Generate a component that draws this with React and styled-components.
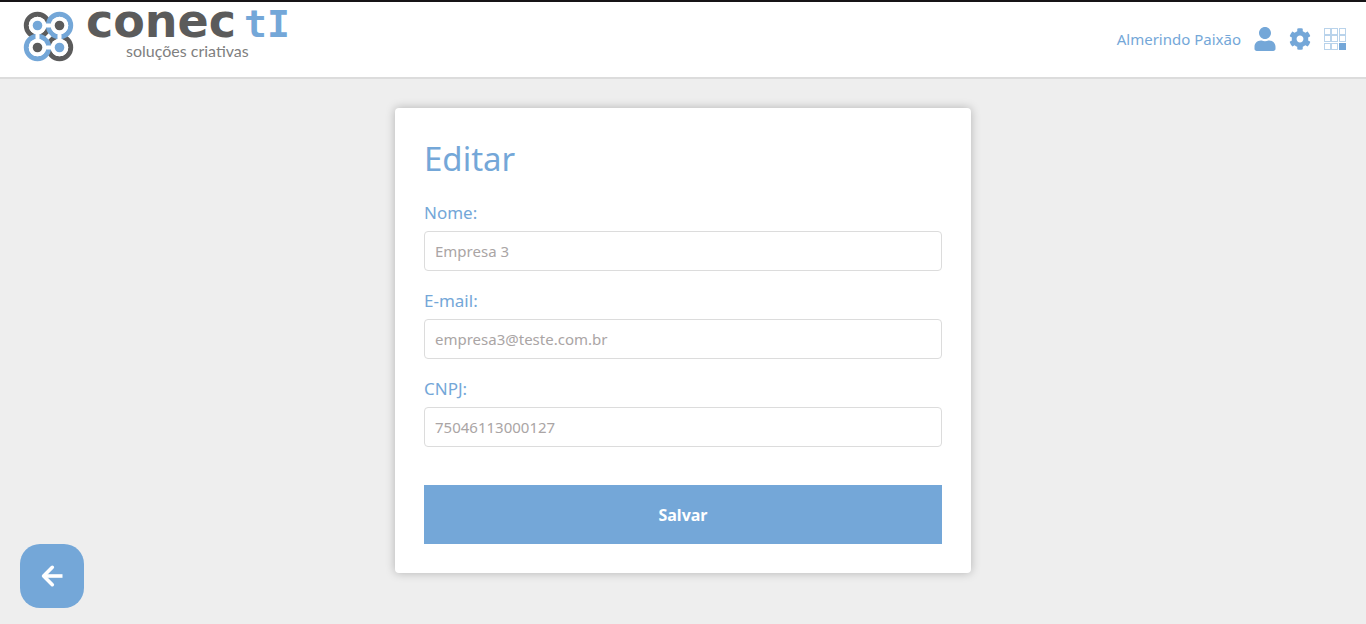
import React from 'react';
import styled, { createGlobalStyle } from 'styled-components';
import { FaUser, FaCog } from 'react-icons/fa';

const blue = '#74a7d8';
const dark = '#5b5b5b';

const GlobalStyle = createGlobalStyle`
  *, *::before, *::after { box-sizing: border-box; }
  html { background: #eee; }
  body {
    margin: 0;
    background: #eee;
    color: ${blue};
    font-family: "Noto Sans", sans-serif;
  }
`;

const Page = styled.div`
  min-height: 100vh;
`;

const Header = styled.header`
  display: flex;
  align-items: flex-start;
  justify-content: space-between;
  height: 79px;
  padding: 9px 20px 0 23px;
  background: #fff;
  border-top: 2px solid #161416;
  border-bottom: 2px solid #dcdcdc;
`;

const Brand = styled.a`
  display: flex;
  gap: 12px;
  text-decoration: none;
`;

const BrandText = styled.span`
  display: flex;
  flex-direction: column;
`;

const Wordmark = styled.span`
  display: flex;
  align-items: baseline;
  gap: 8px;
  height: 28px;
  font: bold 46px/20px "DejaVu Sans", sans-serif;
  color: ${dark};
`;

const WordmarkEnd = styled.span`
  font-family: "DejaVu Sans Mono", monospace;
  font-size: 38px;
  color: ${blue};
`;

const Tagline = styled.span`
  padding-left: 40px;
  font: 16px/24px Lato, sans-serif;
  color: #808080;
`;

const UserNav = styled.nav`
  display: flex;
  align-items: center;
  gap: 13px;
  padding-top: 16px;
`;

const UserName = styled.span`
  font: 15px/24px "Noto Sans", sans-serif;
`;

const IconButton = styled.button`
  display: flex;
  justify-content: center;
  width: 22px;
  padding: 0;
  border: 0;
  background: none;
  color: ${blue};
  cursor: pointer;
`;

const Main = styled.main`
  padding: 29px 20px;
`;

const Card = styled.form`
  display: flex;
  flex-direction: column;
  max-width: 576px;
  margin: 0 auto;
  padding: 29px;
  border-radius: 4px;
  background: #fff;
  box-shadow: 0 0 10px rgba(0, 0, 0, 0.25);
`;

const Title = styled.h1`
  margin: 0 0 20px;
  font-size: 33px;
  line-height: 44px;
  font-weight: 400;
`;

const Fields = styled.div`
  display: flex;
  flex-direction: column;
  gap: 18px;
`;

const Field = styled.div`
  display: flex;
  flex-direction: column;
  gap: 6px;
`;

const Label = styled.label`
  font-size: 17px;
  line-height: 24px;
`;

const Input = styled.input`
  height: 40px;
  width: 100%;
  padding: 0 10px;
  border: 1px solid #dcdcdc;
  border-radius: 4px;
  background: #fff;
  color: #aaa5a5;
  font: 15px "Noto Sans", sans-serif;
`;

const SaveButton = styled.button`
  height: 59px;
  margin-top: 38px;
  border: 0;
  background: ${blue};
  color: #fff;
  font: bold 16px "Noto Sans", sans-serif;
  cursor: pointer;
`;

const BackButton = styled.button`
  position: fixed;
  left: 20px;
  bottom: 16px;
  display: flex;
  align-items: center;
  justify-content: center;
  width: 64px;
  height: 64px;
  padding: 0;
  border: 0;
  border-radius: 20px;
  background: ${blue};
  cursor: pointer;
`;

const logoNodes = [
  { x: 14.5, y: 14.5, ring: dark, dot: blue },
  { x: 36.5, y: 36.5, ring: dark, dot: blue },
  { x: 36.5, y: 14.5, ring: blue, dot: dark },
  { x: 14.5, y: 36.5, ring: blue, dot: dark },
];

function LogoMark() {
  return (
    <svg width="51" height="51" viewBox="0 0 51 51" aria-hidden="true">
      {logoNodes.map(({ x, y, ring }) => (
        <circle key={`${x}-${y}`} cx={x} cy={y} r="11.2" fill="none" stroke={ring} strokeWidth="5" />
      ))}
      {logoNodes.map(({ x, y }) => (
        <circle key={`${x}-${y}`} cx={x} cy={y} r="8.8" fill="#fff" />
      ))}
      <path d="M14.5 14.5H36.5V36.5H14.5Z" fill="none" stroke="#fff" strokeWidth="4" />
      <path d="M25.5 22.5L28.5 25.5L25.5 28.5L22.5 25.5Z" fill="#fff" />
      {logoNodes.map(({ x, y, dot }) => (
        <circle key={`${x}-${y}`} cx={x} cy={y} r="4.8" fill={dot} />
      ))}
    </svg>
  );
}

function GridIcon() {
  const steps = [0.5, 7.5, 15.5];
  return (
    <svg width="22" height="22" viewBox="0 0 22 22" aria-hidden="true">
      {steps.map((y) =>
        steps.map((x) => {
          const last = x === 15.5 && y === 15.5;
          return (
            <rect
              key={`${x}-${y}`}
              x={x}
              y={y}
              width="6"
              height="6"
              fill={last ? blue : '#fff'}
              stroke={blue}
              strokeOpacity={last ? 1 : 0.5}
            />
          );
        })
      )}
    </svg>
  );
}

const fields = [
  { id: 'nome', label: 'Nome:', type: 'text', value: 'Empresa 3' },
  { id: 'email', label: 'E-mail:', type: 'email', value: 'empresa3@teste.com.br' },
  { id: 'cnpj', label: 'CNPJ:', type: 'text', value: '75046113000127' },
];

export default function App() {
  return (
    <Page>
      <GlobalStyle />
      <Header>
        <Brand href="#">
          <LogoMark />
          <BrandText>
            <Wordmark>
              conec<WordmarkEnd>tI</WordmarkEnd>
            </Wordmark>
            <Tagline>soluções criativas</Tagline>
          </BrandText>
        </Brand>
        <UserNav>
          <UserName>Almerindo Paixão</UserName>
          <IconButton type="button" aria-label="Perfil"><FaUser size={24} /></IconButton>
          <IconButton type="button" aria-label="Configurações"><FaCog size={24} /></IconButton>
          <IconButton type="button" aria-label="Aplicativos"><GridIcon /></IconButton>
        </UserNav>
      </Header>
      <Main>
        <Card onSubmit={(e) => e.preventDefault()}>
          <Title>Editar</Title>
          <Fields>
            {fields.map((f) => (
              <Field key={f.id}>
                <Label htmlFor={f.id}>{f.label}</Label>
                <Input id={f.id} type={f.type} defaultValue={f.value} />
              </Field>
            ))}
          </Fields>
          <SaveButton type="submit">Salvar</SaveButton>
        </Card>
      </Main>
      <BackButton type="button" aria-label="Voltar">
        <svg width="24" height="24" viewBox="0 0 24 24" fill="none" stroke="#fff" strokeWidth="3.6" strokeLinejoin="round" aria-hidden="true">
          <path d="M12.3 3.3L3.6 12L12.3 20.7" strokeLinecap="round" />
          <path d="M4 12H22.5" />
        </svg>
      </BackButton>
    </Page>
  );
}
